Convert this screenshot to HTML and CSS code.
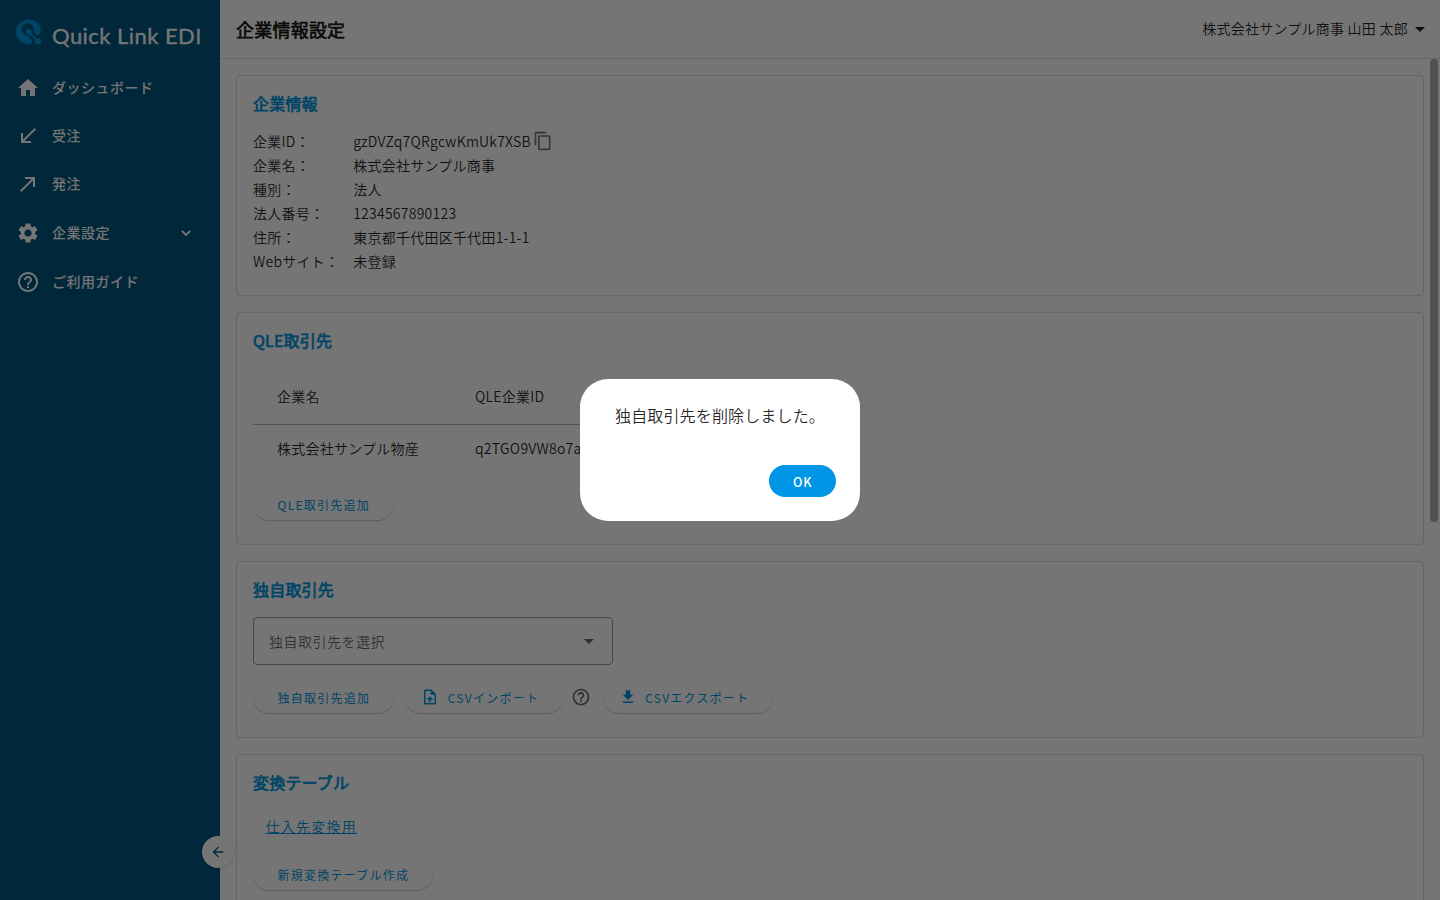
FILE: index.html
```html
<!DOCTYPE html>
<html lang="ja">
<head>
    <meta charset="UTF-8">
    <meta name="viewport" content="width=device-width, initial-scale=1.0">
    <title>企業情報設定 | Quick Link EDI</title>
    <link rel="stylesheet" href="styles.css">
</head>
<body>
    <div class="app">
        <nav class="sidebar">
            <div class="logo">
                <svg class="logo-mark" viewBox="0.800 0 26 26">
                    <path d="M22.500 17C26.500 13.500 26.500 8 23 4.800A12.600 12.600 0 1 0 12.500 25.500H14.500C17.500 25 17.500 21.500 15.500 20L12 16.200A6 6 0 1 1 18.500 11C18.500 13.500 20.500 14.500 22.500 17Z"/>
                    <circle cx="13.500" cy="12.800" r="2.800"/>
                    <path d="M15.500 11.500C16.500 16.500 20 18 23 19.600L20 22.500C18 18.500 16 16.500 12.200 15Z"/>
                    <circle cx="22.800" cy="22.500" r="3"/>
                </svg>
                <span class="logo-text">Quick Link EDI</span>
            </div>
            <a class="nav-item">
                <svg class="icon" viewBox="0 0 24 24"><path d="M10 20v-6h4v6h5v-8h3L12 3 2 12h3v8z"/></svg>
                <span>ダッシュボード</span>
            </a>
            <a class="nav-item">
                <svg class="icon" viewBox="0 0 24 24"><path d="M20 5.410 18.590 4 7 15.590V9H5v10h10v-2H8.410z"/></svg>
                <span>受注</span>
            </a>
            <a class="nav-item">
                <svg class="icon" viewBox="0 0 24 24"><path d="M9 5v2h6.590L4 18.590 5.410 20 17 8.410V15h2V5z"/></svg>
                <span>発注</span>
            </a>
            <a class="nav-item nav-parent">
                <svg class="icon" viewBox="0 0 24 24"><path d="M19.140 12.940c.04-.3.06-.61.06-.94 0-.32-.02-.64-.07-.94l2.030-1.580c.18-.14.23-.41.12-.61l-1.920-3.320c-.12-.22-.37-.29-.59-.22l-2.390.96c-.5-.38-1.030-.7-1.620-.94l-.36-2.540c-.04-.24-.24-.41-.48-.41h-3.840c-.24 0-.43.17-.47.41l-.36 2.540c-.59.24-1.130.57-1.620.94l-2.390-.96c-.22-.08-.47 0-.59.22L2.740 8.870c-.12.21-.08.47.12.61l2.030 1.580c-.05.3-.09.63-.09.94s.02.64.07.94l-2.030 1.580c-.18.14-.23.41-.12.61l1.920 3.320c.12.22.37.29.59.22l2.390-.96c.5.38 1.030.7 1.620.94l.36 2.540c.05.24.24.41.48.41h3.840c.24 0 .44-.17.47-.41l.36-2.540c.59-.24 1.130-.56 1.620-.94l2.390.96c.22.08.47 0 .59-.22l1.920-3.320c.12-.22.07-.47-.12-.61l-2.010-1.580zM12 15.600c-1.980 0-3.600-1.620-3.600-3.600s1.620-3.600 3.600-3.600 3.600 1.620 3.600 3.600-1.620 3.600-3.600 3.600z"/></svg>
                <span>企業設定</span>
                <svg class="chevron" viewBox="0 0 24 24"><path d="M16.590 8.590 12 13.170 7.410 8.590 6 10l6 6 6-6z"/></svg>
            </a>
            <a class="nav-item nav-guide">
                <svg class="icon" viewBox="0 0 24 24"><path d="M11 18h2v-2h-2v2zm1-16C6.480 2 2 6.480 2 12s4.480 10 10 10 10-4.480 10-10S17.520 2 12 2zm0 18c-4.410 0-8-3.590-8-8s3.590-8 8-8 8 3.590 8 8-3.590 8-8 8zm0-14c-2.210 0-4 1.790-4 4h2c0-1.100.9-2 2-2s2 .9 2 2c0 2-3 1.750-3 5h2c0-2.250 3-2.500 3-5 0-2.210-1.790-4-4-4z"/></svg>
                <span>ご利用ガイド</span>
            </a>
            <button class="collapse">
                <svg viewBox="0 0 24 24"><path d="M20 11H7.830l5.590-5.590L12 4l-8 8 8 8 1.410-1.410L7.830 13H20z"/></svg>
            </button>
        </nav>

        <div class="main">
            <header class="header">
                <h1>企業情報設定</h1>
                <div class="account"><span>株式会社サンプル商事 山田 太郎</span>
                    <svg class="account-arrow" viewBox="0 0 10 5"><path d="M0 0h10L5 5z"/></svg>
                </div>
            </header>

            <div class="content">
                <section class="card card-info">
                    <h2>企業情報</h2>
                    <dl class="info">
                        <dt>企業ID：</dt>
                        <dd>gzDVZq7QRgcwKmUk7XSB<svg class="copy" viewBox="0 0 24 24"><path d="M16 1H4c-1.100 0-2 .9-2 2v14h2V3h12V1zm3 4H8c-1.100 0-2 .9-2 2v14c0 1.100.9 2 2 2h11c1.100 0 2-.9 2-2V7c0-1.100-.9-2-2-2zm0 16H8V7h11v14z"/></svg></dd>
                        <dt>企業名：</dt>
                        <dd>株式会社サンプル商事</dd>
                        <dt>種別：</dt>
                        <dd>法人</dd>
                        <dt>法人番号：</dt>
                        <dd>1234567890123</dd>
                        <dt>住所：</dt>
                        <dd>東京都千代田区千代田1-1-1</dd>
                        <dt>Webサイト：</dt>
                        <dd>未登録</dd>
                    </dl>
                </section>

                <section class="card card-partner">
                    <h2>QLE取引先</h2>
                    <div class="table">
                        <div class="table-row table-head">
                            <span>企業名</span>
                            <span>QLE企業ID</span>
                        </div>
                        <div class="table-row">
                            <span>株式会社サンプル物産</span>
                            <span>q2TGO9VW8o7a</span>
                        </div>
                    </div>
                    <button class="button">QLE取引先追加</button>
                </section>

                <section class="card card-own">
                    <h2>独自取引先</h2>
                    <div class="select">
                        <span>独自取引先を選択</span>
                        <svg class="select-arrow" viewBox="0 0 10 5"><path d="M0 0h10L5 5z"/></svg>
                    </div>
                    <div class="actions">
                        <button class="button">独自取引先追加</button>
                        <button class="button button-icon">
                            <svg viewBox="0 0 24 24"><path d="M14 2H6c-1.100 0-1.990.9-1.990 2L4 20c0 1.100.89 2 1.990 2H18c1.100 0 2-.9 2-2V8l-6-6zm4 18H6V4h7v5h5v11zM8 15.010l1.410 1.410L11 14.840V19h2v-4.160l1.590 1.590L16 15.010 12.010 11z"/></svg>
                            CSVインポート
                        </button>
                        <svg class="help" viewBox="0 0 24 24"><path d="M11 18h2v-2h-2v2zm1-16C6.480 2 2 6.480 2 12s4.480 10 10 10 10-4.480 10-10S17.520 2 12 2zm0 18c-4.410 0-8-3.590-8-8s3.590-8 8-8 8 3.590 8 8-3.590 8-8 8zm0-14c-2.210 0-4 1.790-4 4h2c0-1.100.9-2 2-2s2 .9 2 2c0 2-3 1.750-3 5h2c0-2.250 3-2.500 3-5 0-2.210-1.790-4-4-4z"/></svg>
                        <button class="button button-icon">
                            <svg viewBox="0 0 24 24"><path d="M19 9h-4V3H9v6H5l7 7 7-7zM5 18v2h14v-2H5z"/></svg>
                            CSVエクスポート
                        </button>
                    </div>
                </section>

                <section class="card card-convert">
                    <h2>変換テーブル</h2>
                    <a class="link">仕入先変換用</a>
                    <button class="button">新規変換テーブル作成</button>
                </section>
            </div>
            <div class="scrollbar"></div>
        </div>
    </div>

    <div class="backdrop">
        <div class="dialog">
            <p>独自取引先を削除しました。</p>
            <button class="button-ok">OK</button>
        </div>
    </div>
</body>
</html>
```
FILE: styles.css
```css
* {
    box-sizing: border-box;
}

body {
    margin: 0;
    height: 100vh;
    overflow: hidden;
    font-family: "Noto Sans CJK JP", sans-serif;
    font-size: 14px;
    font-weight: 350;
    letter-spacing: 0.25px;
    color: rgba(0, 0, 0, 0.87);
    background: white;
}

h1, h2, p, dl, dd {
    margin: 0;
}

button {
    font-family: inherit;
    border: none;
    cursor: pointer;
}

svg {
    display: block;
    fill: currentColor;
    flex-shrink: 0;
}

.app {
    display: flex;
    height: 100vh;
}

/* サイドバー */
.sidebar {
    position: relative;
    z-index: 1;
    width: 220px;
    flex-shrink: 0;
    background: #00557e;
    color: white;
}

.logo {
    display: flex;
    height: 64px;
    padding: 19px 0 0 16px;
}

.logo-mark {
    width: 26px;
    height: 26px;
    fill: #0096e1;
}

.logo-text {
    margin-left: 10px;
    font-family: Lato, sans-serif;
    font-size: 22px;
    font-weight: 400;
    line-height: 34px;
    letter-spacing: 0.45px;
    white-space: nowrap;
    -webkit-text-stroke: 0.3px white;
}

.nav-item {
    display: flex;
    align-items: center;
    height: 48px;
    padding: 0 22px 0 16px;
    font-weight: 500;
    letter-spacing: 0.5px;
}

.nav-item span {
    padding-bottom: 2px;
}

.nav-item .icon {
    width: 24px;
    height: 24px;
    margin-right: 12px;
}

.nav-parent {
    height: 50px;
}

.nav-item .chevron {
    width: 18px;
    height: 18px;
    margin-left: auto;
    margin-right: 3px;
    stroke: currentColor;
    stroke-width: 0.8;
}

.collapse {
    position: absolute;
    left: 202px;
    bottom: 32px;
    width: 32px;
    height: 32px;
    padding: 8px;
    border-radius: 50%;
    background: white;
    color: #00557e;
    box-shadow: 0 1px 2px rgba(0, 0, 0, 0.15);
}

.collapse svg {
    width: 16px;
    height: 16px;
}

/* メイン */
.main {
    position: relative;
    flex: 1;
    min-width: 0;
}

.header {
    display: flex;
    align-items: center;
    justify-content: space-between;
    height: 59px;
    padding: 0 15px 0 16px;
    border-bottom: 1px solid #ddd;
}

.header h1 {
    font-size: 18px;
    font-weight: 400;
    letter-spacing: 0.22px;
    -webkit-text-stroke: 0.7px currentColor;
}

.account {
    display: flex;
    align-items: center;
}

.account span {
    padding-bottom: 2px;
}

.account-arrow {
    width: 10px;
    height: 5px;
    margin-left: 7px;
}

.content {
    display: flex;
    flex-direction: column;
    gap: 16px;
    height: 841px;
    padding: 16px 16px 0;
    overflow: hidden;
}

.scrollbar {
    position: absolute;
    top: 59px;
    right: 2px;
    width: 8px;
    height: 463px;
    border-radius: 4px;
    background: #b0b0b0;
}

.card {
    flex-shrink: 0;
    padding: 15px 16px;
    border: 1px solid #ddd;
    border-radius: 4px;
}

.card h2 {
    font-size: 16px;
    font-weight: 400;
    line-height: 24px;
    letter-spacing: 0.2px;
    color: #0096e1;
    -webkit-text-stroke: 0.7px currentColor;
}

.card-info {
    height: 221px;
}

.card-partner {
    height: 233px;
}

.card-own {
    height: 177px;
}

.card-convert {
    height: 200px;
}

.info {
    display: grid;
    grid-template-columns: 100.2px 1fr;
    margin-top: 14px;
    line-height: 24px;
}

.info dd {
    display: flex;
    align-items: center;
    height: 24px;
}

.copy {
    width: 20px;
    height: 20px;
    margin-left: 2px;
    color: rgba(0, 0, 0, 0.54);
}

/* テーブル */
.table {
    width: 500px;
    margin: 17px 0 15px;
}

.table-row {
    display: grid;
    grid-template-columns: 198px 1fr;
    align-items: center;
    height: 48px;
    padding: 0 0 2px 24px;
}

.table-head {
    height: 56px;
    border-bottom: 1px solid #b0b0b0;
}

/* ボタン */
.button {
    display: flex;
    align-items: center;
    height: 32px;
    padding: 0 23.5px 0 24.5px;
    border-radius: 16px;
    background: white;
    color: #0096e1;
    font-size: 12px;
    font-weight: 400;
    letter-spacing: 1.25px;
    box-shadow: 0 1px 1px rgba(0, 0, 0, 0.2);
}

.button-icon {
    padding-left: 16px;
}

.button-icon svg {
    width: 18px;
    height: 18px;
    margin-right: 8.5px;
}

.select {
    display: flex;
    align-items: center;
    justify-content: space-between;
    width: 360px;
    height: 48px;
    margin-top: 16px;
    padding: 0 18px 0 15px;
    border: 1px solid rgba(0, 0, 0, 0.4);
    border-radius: 4px;
    letter-spacing: 0.5px;
    color: rgba(0, 0, 0, 0.6);
}

.select span {
    padding-bottom: 1px;
}

.select-arrow {
    width: 10px;
    height: 5px;
}

.actions {
    display: flex;
    align-items: center;
    margin-top: 16px;
}

.actions .button + .button {
    margin-left: 11.5px;
}

.help {
    width: 20px;
    height: 20px;
    margin: 0 12px 0 8px;
    color: rgba(0, 0, 0, 0.6);
}

.link {
    display: inline-block;
    margin: 20px 0 20px 12.5px;
    line-height: 24px;
    letter-spacing: 1.25px;
    color: #0096e1;
    text-decoration: underline;
}

/* ダイアログ */
.backdrop {
    position: fixed;
    inset: 0;
    z-index: 10;
    display: flex;
    align-items: center;
    justify-content: center;
    background: rgba(0, 0, 0, 0.54);
}

.dialog {
    display: flex;
    flex-direction: column;
    align-items: flex-end;
    justify-content: space-between;
    width: 280px;
    height: 142px;
    padding: 24px;
    border-radius: 28px;
    background: white;
}

.dialog p {
    width: 100%;
    padding-left: 11px;
    font-size: 16px;
    line-height: 24px;
    letter-spacing: 0.15px;
}

.button-ok {
    height: 32px;
    padding: 0 23.5px;
    border-radius: 16px;
    background: #0096e6;
    color: white;
    font-size: 12.5px;
    font-weight: 500;
    letter-spacing: 0.9px;
}
```
